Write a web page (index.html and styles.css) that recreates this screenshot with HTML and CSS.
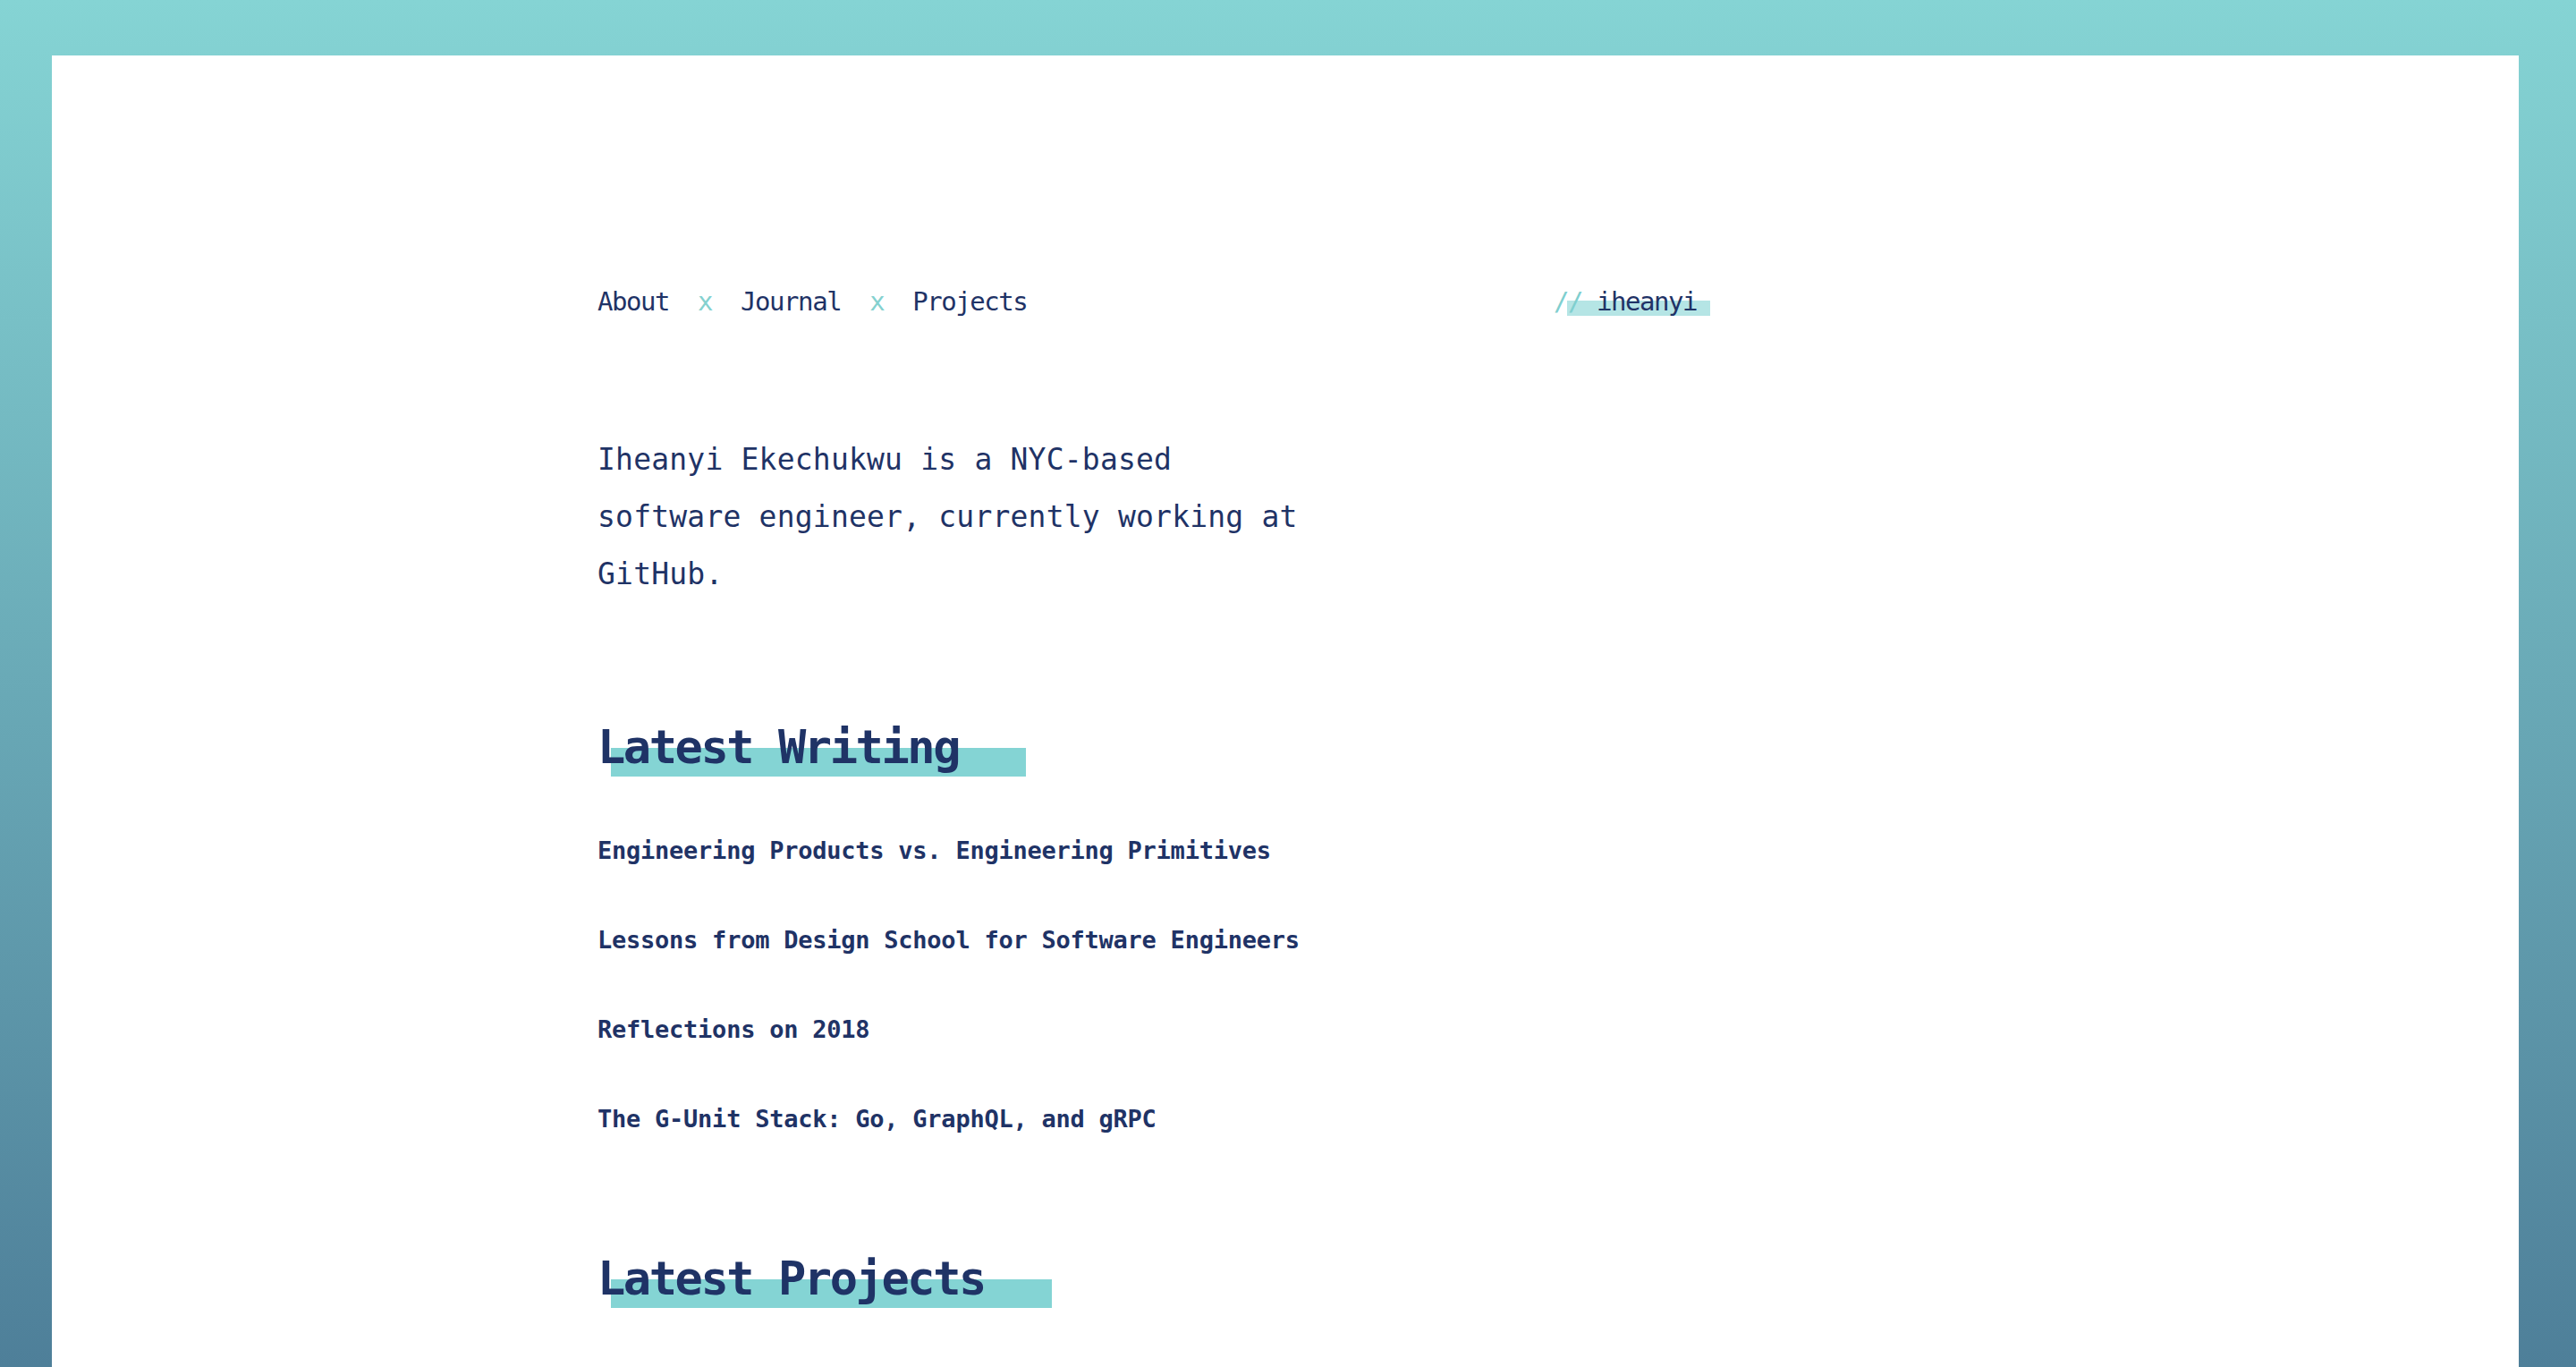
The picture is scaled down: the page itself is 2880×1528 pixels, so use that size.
FILE: index.html
```html
<!DOCTYPE html>
<html lang="en">
<head>
<meta charset="utf-8">
<title>Iheanyi Ekechukwu</title>
<link rel="stylesheet" href="styles.css">
</head>
<body>
<div class="page">
  <header class="nav">
    <nav class="links">
      <a href="#">About</a><span class="sep">x</span><a href="#">Journal</a><span class="sep">x</span><a href="#">Projects</a>
    </nav>
    <a class="logo" href="#"><span class="slashes">//</span> iheanyi</a>
  </header>

  <p class="intro">Iheanyi Ekechukwu is a NYC-based software engineer, currently working at GitHub.</p>

  <h2 class="heading"><span class="hl">Latest Writing</span></h2>
  <ul class="posts">
    <li><a href="#">Engineering Products vs. Engineering Primitives</a></li>
    <li><a href="#">Lessons from Design School for Software Engineers</a></li>
    <li><a href="#">Reflections on 2018</a></li>
    <li><a href="#">The G-Unit Stack: Go, GraphQL, and gRPC</a></li>
  </ul>

  <h2 class="heading heading-projects"><span class="hl">Latest Projects</span></h2>
</div>
</body>
</html>
```
FILE: styles.css
```css
html {
  min-height: 100%;
  background: linear-gradient(to bottom, #85d4d4 0%, #4e7f99 100%) fixed;
}

body {
  margin: 0;
  padding: 62px 64px 0 58px;
  font-family: "DejaVu Sans Mono", monospace;
  color: #1f3366;
}

a {
  color: inherit;
  text-decoration: none;
}

.page {
  background: #ffffff;
  min-height: 1700px;
  padding: 255px 0 200px 610px;
}

.nav {
  display: flex;
  justify-content: space-between;
  align-items: flex-start;
  width: 1229px;
  font-size: 29px;
  line-height: 40px;
  letter-spacing: -1.45px;
}

.links {
  display: flex;
}

.sep {
  color: #84d1cf;
  margin: 0 32px;
}

.logo {
  position: relative;
  z-index: 0;
  display: inline-block;
}

.logo::before {
  content: "";
  position: absolute;
  z-index: -1;
  left: 15px;
  right: -15px;
  top: 19px;
  height: 17px;
  background: #b5e5e5;
}

.slashes {
  color: #7fcfcf;
}

.intro {
  margin: 125px 0 0;
  max-width: 810px;
  font-size: 33px;
  line-height: 64px;
  letter-spacing: 0.2px;
}

.heading {
  margin: 131px 0 0;
  font-size: 52px;
  line-height: 60px;
  font-weight: bold;
  letter-spacing: -2.45px;
}

.heading-projects {
  margin-top: 128px;
}

.hl {
  position: relative;
  z-index: 0;
  display: inline-block;
}

.hl::before {
  content: "";
  position: absolute;
  z-index: -1;
  left: 15px;
  right: -75px;
  top: 31px;
  height: 32px;
  background: #84d4d4;
}

.posts {
  list-style: none;
  margin: 66px 0 0;
  padding: 0;
}

.posts li {
  font-size: 27px;
  line-height: 40px;
  font-weight: bold;
  letter-spacing: -0.24px;
}

.posts li + li {
  margin-top: 60px;
}
```
